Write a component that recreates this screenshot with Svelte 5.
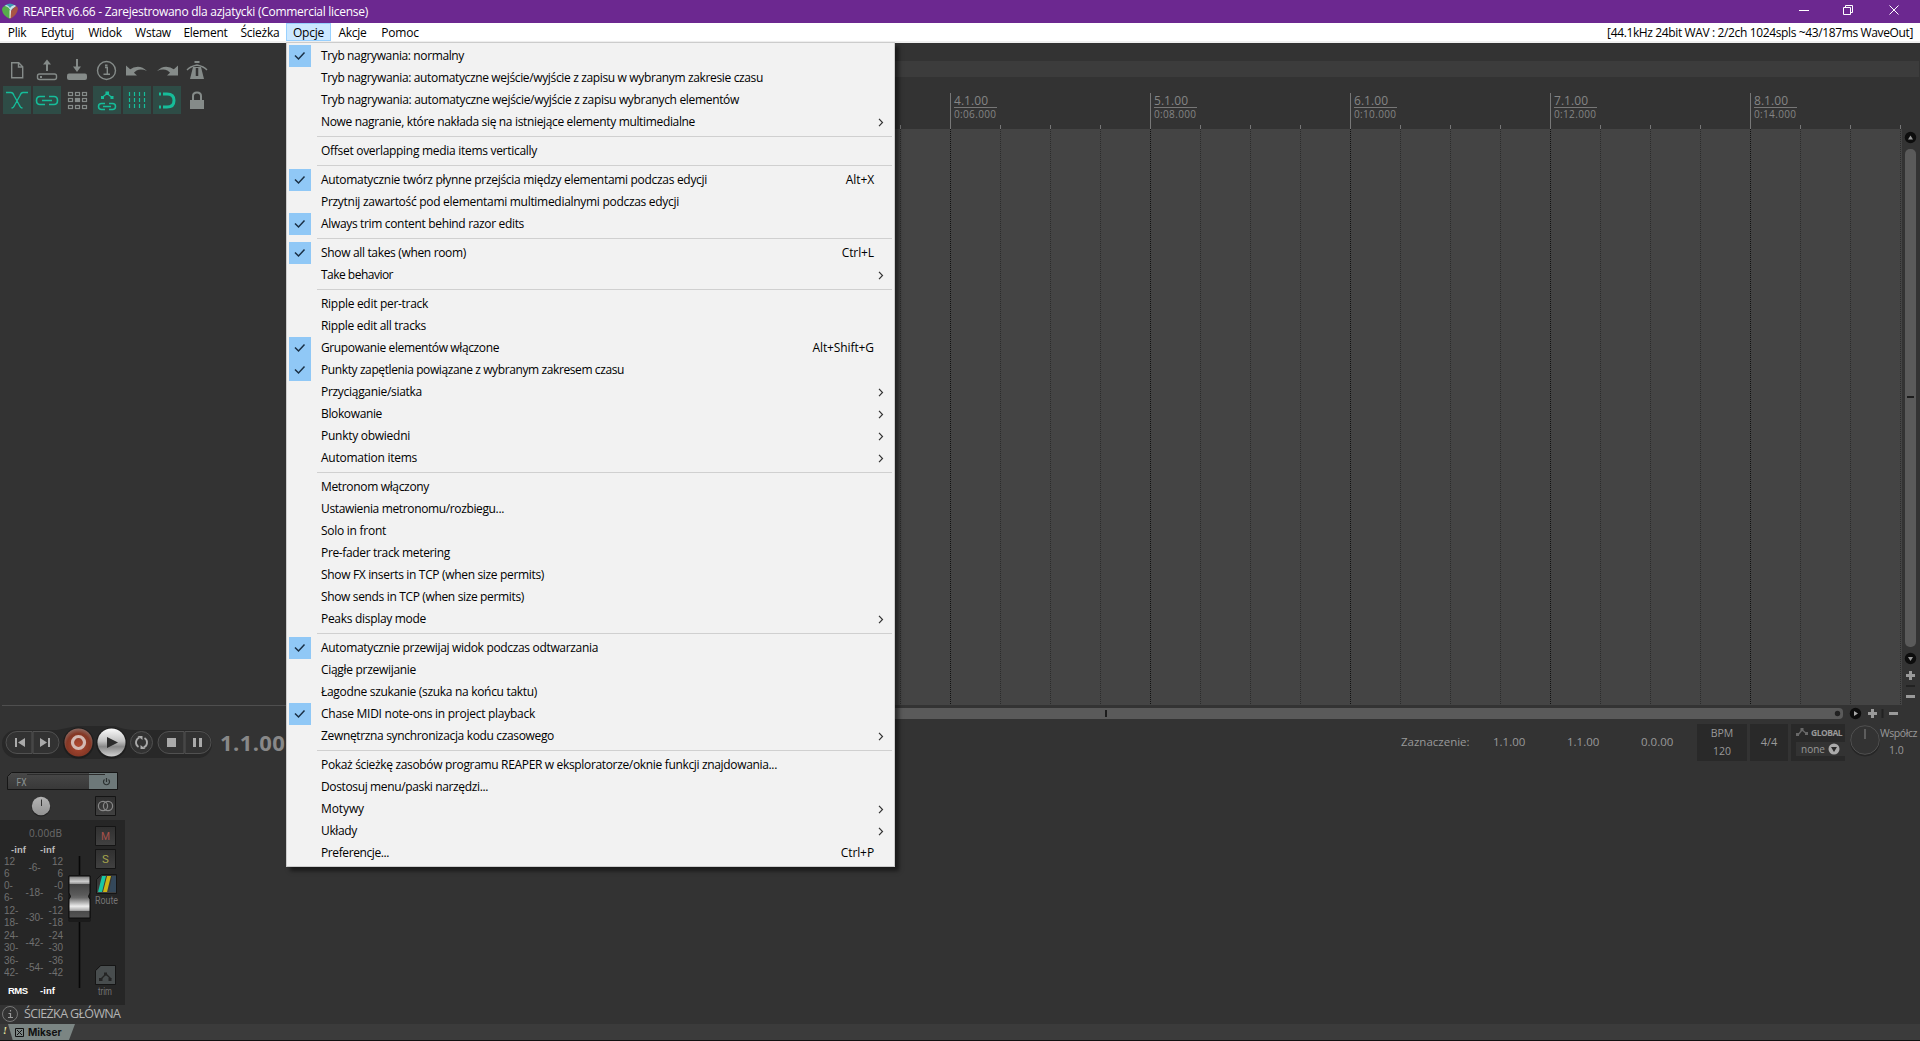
<script>
  const menus = ['Plik', 'Edytuj', 'Widok', 'Wstaw', 'Element', 'Ścieżka', 'Opcje', 'Akcje', 'Pomoc'];
  const w = [34, 47, 48, 48, 57, 52, 45, 43, 52];
  // t: label, w: label width, c: checked, k: shortcut, s: has submenu
  const groups = [
    [
      { t: 'Tryb nagrywania: normalny', w: 143, c: 1 },
      { t: 'Tryb nagrywania: automatyczne wejście/wyjście z zapisu w wybranym zakresie czasu', w: 442 },
      { t: 'Tryb nagrywania: automatyczne wejście/wyjście z zapisu wybranych elementów', w: 418 },
      { t: 'Nowe nagranie, które nakłada się na istniejące elementy multimedialne', w: 374, s: 1 }
    ],
    [{ t: 'Offset overlapping media items vertically', w: 216 }],
    [
      { t: 'Automatycznie twórz płynne przejścia między elementami podczas edycji', w: 386, c: 1, k: 'Alt+X' },
      { t: 'Przytnij zawartość pod elementami multimedialnymi podczas edycji', w: 358 },
      { t: 'Always trim content behind razor edits', w: 203, c: 1 }
    ],
    [{ t: 'Show all takes (when room)', w: 145, c: 1, k: 'Ctrl+L' }, { t: 'Take behavior', w: 72, s: 1 }],
    [
      { t: 'Ripple edit per-track', w: 107 },
      { t: 'Ripple edit all tracks', w: 105 },
      { t: 'Grupowanie elementów włączone', w: 178, c: 1, k: 'Alt+Shift+G' },
      { t: 'Punkty zapętlenia powiązane z wybranym zakresem czasu', w: 303, c: 1 },
      { t: 'Przyciąganie/siatka', w: 101, s: 1 },
      { t: 'Blokowanie', w: 61, s: 1 },
      { t: 'Punkty obwiedni', w: 89, s: 1 },
      { t: 'Automation items', w: 96, s: 1 }
    ],
    [
      { t: 'Metronom włączony', w: 108 },
      { t: 'Ustawienia metronomu/rozbiegu...', w: 183 },
      { t: 'Solo in front', w: 65 },
      { t: 'Pre-fader track metering', w: 129 },
      { t: 'Show FX inserts in TCP (when size permits)', w: 223 },
      { t: 'Show sends in TCP (when size permits)', w: 203 },
      { t: 'Peaks display mode', w: 105, s: 1 }
    ],
    [
      { t: 'Automatycznie przewijaj widok podczas odtwarzania', w: 277, c: 1 },
      { t: 'Ciągłe przewijanie', w: 95 },
      { t: 'Łagodne szukanie (szuka na końcu taktu)', w: 216 },
      { t: 'Chase MIDI note-ons in project playback', w: 214, c: 1 },
      { t: 'Zewnętrzna synchronizacja kodu czasowego', w: 233, s: 1 }
    ],
    [
      { t: 'Pokaż ścieżkę zasobów programu REAPER w eksploratorze/oknie funkcji znajdowania...', w: 456 },
      { t: 'Dostosuj menu/paski narzędzi...', w: 167 },
      { t: 'Motywy', w: 43, s: 1 },
      { t: 'Układy', w: 36, s: 1 },
      { t: 'Preferencje...', w: 68, k: 'Ctrl+P' }
    ]
  ];

  // Spreads the letters of a label so that it takes exactly the given width.
  function fit(node, width) {
    const natural = node.getBoundingClientRect().width;
    node.style.letterSpacing = (width - natural) / node.textContent.length + 'px';
  }

  const beats = Array.from({ length: 21 }, (_, i) => ({ x: 900 + i * 50, major: i % 4 === 1, n: 4 + (i - 1) / 4 }));
  const outer = ['12', '6', '0-', '6-', '12-', '18-', '24-', '30-', '36-', '42-'];
  const right = ['12', '6', '-0', '-6', '-12', '-18', '-24', '-30', '-36', '-42'];
  const scaleY = [11, 23, 35, 47, 60, 72, 85, 97, 110, 122];
  const mid = ['-6-', '-18-', '-30-', '-42-', '-54-'];
</script>

<div class="app">
  <header class="title">
    <svg class="logo" width="16" height="17" viewBox="0 0 16 17">
      <path d="M2 3Q8-2 14 3L10 6L8 9Q7 4 2 3Z" fill="#3f9bb5" />
      <path d="M0 7Q0 3 4 3Q8 4 8 8V16Q1 13 0 7Z" fill="#57ad4c" />
      <path d="M16 6Q15 12 8 16V11Q9 6 14 3Q16 4 16 6Z" fill="#a85445" />
      <path d="M3 3Q8 4 8.500 9Q10 5 14 3L12.500 2Q9 3 8 5Q6 2 4 2Z" fill="#cfe3e6" />
      <path d="M7.500 7L9 8L8.500 15H7.500Z" fill="#e8e8e0" />
    </svg>
    <span class="cap">REAPER v6.66 - Zarejestrowano dla azjatycki (Commercial license)</span>
    <svg class="win" width="110" height="23" viewBox="0 0 110 23" fill="none" stroke="#fff">
      <path d="M5 10.500h10M49.500 7.500h7v7h-7zM51.500 7.500v-2h7v7h-2M95.500 5.500l9 9M104.500 5.500l-9 9" />
    </svg>
  </header>
  <nav>
    {#each menus as m, i}
      <span class="mi" class:on={m === 'Opcje'} style:width="{w[i]}px">{m}</span>
    {/each}
    <span class="audio">[44.1kHz 24bit WAV : 2/2ch 1024spls ~43/187ms WaveOut]</span>
  </nav>

  <main>
    <aside>
      <svg class="tools" width="220" height="80" viewBox="0 0 220 80">
        <g fill="none" stroke="#858b89" stroke-width="1.400">
          <path d="M11.700 19.700h7l4 4v11h-11zM18.500 20v4h4" />
          <rect x="37.500" y="31" width="19" height="5.500" rx="2" />
          <circle cx="106.500" cy="27.500" r="9" />
          <path d="M47 28v-8M77 16v8" stroke-width="2" />
          <path d="M105 24.500h2.300v6.500M103.500 31.300h6.500" />
          <path d="M187 27q3-3.500 10-5M207 27q-3-3.500-10-5" stroke-width="1.300" />
        </g>
        <g fill="#858b89">
          <path d="M43 21.500l4-5 4 5zM73 23.500h8l-4 5.500z" />
          <rect x="67" y="30.500" width="20" height="6.500" rx="2" />
          <rect x="40" y="33" width="2" height="2" />
          <rect x="105" y="21.500" width="2.500" height="2" />
          <path d="M126 22.500l11 10h-11zM129 27q10-7 18 1q-9-4-14 3zM178 22.500l-11 10h11zM175 27q-10-7-18 1q9-4 14 3z" />
          <path d="M194.500 18h5v2h-5zM193 24h8l3 12h-14z" />
        </g>
        <path d="M197 25v8" stroke="#333" stroke-width="2.500" />
        <rect x="190" y="57" width="14" height="9" fill="#858b89" />
        <path d="M193 57v-4q0-3.500 4-3.500t4 3.500v4" fill="none" stroke="#858b89" stroke-width="2" />
        <g fill="#2e4c46">
          <rect x="3" y="43" width="28" height="28" /><rect x="33" y="43" width="28" height="28" />
          <rect x="93" y="43" width="28" height="28" /><rect x="123" y="43" width="28" height="28" />
          <rect x="153" y="43" width="28" height="28" />
        </g>
        <g fill="none" stroke="#16bd9a" stroke-width="1.300">
          <path d="M6 49.500h5q2 0 3 3l5 9q1.500 3.500 3.500 3.500M28 49.500h-5q-2 0-3 3l-5 9q-1.500 3.500-3.500 3.500" />
          <path d="M45 53.500h-5q-3.500 0-3.500 4t3.500 4h5M49 53.500h5q3.500 0 3.500 4t-3.500 4h-5M42 57.500h10" stroke-width="1.600" />
          <path d="M105 60.500h-3.500q-3 0-3 3t3 3h3.500M109 60.500h3.500q3 0 3 3t-3 3h-3.500M103 63.500h8" stroke-width="1.500" />
          <path d="M102 54.500l5-4 5 4" />
          <path d="M129.500 49v17M134.500 49v17M139.500 49v17M144.500 49v17" stroke-dasharray="4 2" stroke-width="1.200" />
          <path d="M163 51h4q7 0 7 6.500t-7 6.500h-4" stroke-width="3" />
        </g>
        <g fill="#16bd9a">
          <rect x="101" y="53" width="3" height="3" /><rect x="105.500" y="48.500" width="3.500" height="3.500" /><rect x="110.500" y="53" width="3" height="3" />
          <rect x="159" y="49.500" width="2" height="3" /><rect x="159" y="62.500" width="2" height="3" />
        </g>
        <g fill="none" stroke="#858b89" stroke-width="1.200">
          {#each [49.5, 55.5, 62.5] as y}
            {#each [68.5, 75.5, 82.5] as x}
              <rect {x} {y} width="4" height="3" fill={x === 75.5 && y === 55.5 ? '#858b89' : 'none'} />
            {/each}
          {/each}
        </g>
      </svg>
    </aside>
    <section class="arrange">
      <svg width="1634" height="663" viewBox="286 43 1634 663">
        <rect x="286" y="61" width="1633" height="16" fill="#3c3c3c" />
        <rect x="286" y="129" width="1616" height="576" fill="#444" />
        {#each beats as b}
          <path d="M{b.x + 0.5} {b.major ? 93 : 125}V129" stroke="#777" />
          <path d="M{b.x + 0.5} 129V705" stroke={b.major ? '#111' : '#2b2b2b'} stroke-dasharray="1 1" />
          {#if b.major}
            <text x={b.x + 4} y="105" font-size="12" textLength="34">{b.n}.1.00</text>
            <path d="M{b.x + 4} 107.500h43" stroke="#777" />
            <text x={b.x + 4} y="118" font-size="10" textLength="42">0:{String((b.n - 1) * 2).padStart(2, '0')}.000</text>
          {/if}
        {/each}
        <rect x="1905" y="149" width="11" height="498" rx="5" fill="#5a5a5a" />
        <path d="M1907 397h7" stroke="#1c1c1c" stroke-width="2" />
        <g fill="#0d0d0d"><circle cx="1910.500" cy="137.500" r="5.700" /><circle cx="1910.500" cy="658.500" r="5.700" /></g>
        <path d="M1908 139.500h5l-2.500-4zM1908 657h5l-2.500 4z" fill="#999" />
        <path d="M1906 675.500h9M1910.500 671v9M1906 696.500h9" stroke="#9a9a9a" stroke-width="3" />
        <path d="M1906 686h9" stroke="#222" stroke-width="2" />
      </svg>
    </section>
  </main>

  <div class="hscroll">
    <svg width="1634" height="16" viewBox="286 705 1634 16">
      <rect x="280" y="708" width="1563" height="11" rx="4" fill="#5a5a5a" />
      <path d="M1106 710v7" stroke="#1c1c1c" stroke-width="2" />
      <circle cx="1837.500" cy="713.500" r="2.700" fill="#222" />
      <circle cx="1855.500" cy="713.500" r="5.700" fill="#0d0d0d" />
      <path d="M1854 711v5l4-2.500z" fill="#aaa" />
      <path d="M1868 713.500h9M1872.500 709v9M1889 713.500h9" stroke="#9a9a9a" stroke-width="3" />
      <path d="M1882.500 709v9" stroke="#222" stroke-width="2" />
    </svg>
  </div>

  <section class="transport">
    <svg class="btns" width="216" height="46" viewBox="0 720 216 46">
      <defs>
        <radialGradient id="rec" cx=".5" cy=".6" r=".6"><stop offset="0" stop-color="#b04a32" /><stop offset=".7" stop-color="#843725" /><stop offset="1" stop-color="#8d6961" /></radialGradient>
        <linearGradient id="ply" x2="0" y2="1"><stop offset="0" stop-color="#fafafa" /><stop offset=".45" stop-color="#c2c2c2" /><stop offset=".65" stop-color="#888" /><stop offset="1" stop-color="#d0d0d0" /></linearGradient>
      </defs>
      <path d="M16 730h41q10-2 20-4h38q10 4 20 4h63a13 13 0 0 1 0 28h-63q-10-1-20 1h-38q-10-2-20-1h-41a13 13 0 0 1 0-28z" fill="#282828" />
      <g fill="#323232" stroke="#515151">
        <path d="M32 731.500H17a11 11 0 0 0 0 22H32zM33 731.500H48a11 11 0 0 1 0 22H33z" />
        <path d="M184 731.500H169a11 11 0 0 0 0 22H184zM185 731.500H200a11 11 0 0 1 0 22H185z" />
        <circle cx="141.500" cy="742.500" r="11" />
      </g>
      <circle cx="78.500" cy="743" r="15.500" fill="#1d1d1d" /><circle cx="78.500" cy="742.500" r="14" fill="url(#rec)" />
      <circle cx="78.500" cy="742.500" r="6" fill="none" stroke="#d3bab4" stroke-width="3.200" />
      <circle cx="111.500" cy="743" r="15.500" fill="#1d1d1d" /><circle cx="111.500" cy="742.500" r="14" fill="url(#ply)" />
      <path d="M107 737v11l11-5.500z" fill="#2c2c2c" />
      <g fill="#aaa">
        <path d="M15 738h2v9h-2zM25 738v9l-7-4.500zM40 738v9l7-4.500zM48 738h2v9h-2zM167 738h9v9h-9zM193 738h3v9h-3zM199 738h3v9h-3z" />
      </g>
      <g fill="none" stroke="#aaa" stroke-width="1.800"><path d="M138.500 747a5.300 5.300 0 0 1 1-9.500M144.500 738a5.300 5.300 0 0 1-1 9.500" /></g>
      <path d="M137.500 736h5v4zM145.500 749h-5v-4z" fill="#aaa" />
    </svg>
    <span class="pos">1.1.00</span>
    <div class="sel"><span>Zaznaczenie:</span><span>1.1.00</span><span>1.1.00</span><span>0.0.00</span></div>
    <div class="box bpm"><span>BPM</span><span>120</span></div>
    <div class="box sig">4/4</div>
    <div class="box glob">
      <div class="gl"><svg width="13" height="10" viewBox="0 0 13 10"><path d="M2 8l4-5 5 4" fill="none" stroke="#686868" stroke-width="1.300" /><path d="M0 6h3v3h-3zM4.500 1h3v3h-3zM9 5h3v3h-3z" fill="#686868" /></svg>GLOBAL</div>
      <div class="none">none<svg width="12" height="12" viewBox="0 0 12 12"><circle cx="6" cy="6" r="5.500" fill="#aaa" /><path d="M3 4h6l-3 5z" fill="#2a2a2a" /></svg></div>
    </div>
    <svg class="knob" width="32" height="34" viewBox="0 0 32 34"><circle cx="16" cy="17.500" r="15" fill="#262626" /><circle cx="16" cy="16" r="14.300" fill="#333" stroke="#505050" /><path d="M16 5v10" stroke="#888" /></svg>
    <div class="rate"><span use:fit={37}>Współcz</span><span>1.0</span></div>
  </section>

  <section class="mixer">
    <svg width="130" height="255" viewBox="0 769 130 255">
      <defs>
        <linearGradient id="fx" x2="0" y2="1"><stop offset="0" stop-color="#484848" /><stop offset="1" stop-color="#383838" /></linearGradient>
        <linearGradient id="bt" x2="0" y2="1"><stop offset="0" stop-color="#303030" /><stop offset="1" stop-color="#414141" /></linearGradient>
        <linearGradient id="pan" x2="0" y2="1"><stop offset="0" stop-color="#b4b4b4" /><stop offset="1" stop-color="#929292" /></linearGradient>
        <linearGradient id="fad" x2="0" y2="1">
          <stop offset="0" stop-color="#777" /><stop offset=".13" stop-color="#ccc" /><stop offset=".18" stop-color="#999" /><stop offset=".2" stop-color="#444" /><stop offset=".45" stop-color="#5b5b5b" />
          <stop offset=".52" stop-color="#6a6a6a" /><stop offset=".72" stop-color="#ededed" /><stop offset=".82" stop-color="#aaa" /><stop offset=".84" stop-color="#4a4a4a" /><stop offset="1" stop-color="#555" />
        </linearGradient>
      </defs>
      <rect x="0" y="820" width="125" height="185" fill="#262626" />
      <path d="M7.500 789.500v-13l4-4h106v17z" fill="url(#fx)" stroke="#161616" />
      <rect x="89" y="773" width="28" height="16" fill="#6d7879" />
      <path d="M27 774.500h78" stroke="#2b2b2b" />
      <text class="rb" x="16.500" y="785.500" font-size="10.500" textLength="10" lengthAdjust="spacingAndGlyphs" fill="#8b9291">FX</text>
      <path d="M104.500 779.500a3 3 0 1 0 4 0M106.500 778v4" fill="none" stroke="#2b3030" stroke-width="1.200" />
      <circle cx="41" cy="807" r="9.500" fill="#222" /><circle cx="41" cy="806" r="9.200" fill="url(#pan)" /><path d="M41.500 799.500v6.500" stroke="#333" />
      <g fill="url(#bt)" stroke="#151515">
        <path d="M95.500 796.500h20v19h-20z" /><path d="M95.500 826.500h20v19h-20z" /><path d="M95.500 849.500h20v19h-20z" />
        <path d="M96.500 893.500v-14l5-5h15v19z" /><path d="M95.500 984.500v-14l5-5h15v19z" />
      </g>
      <path d="M96 984v-13l5-5h14v18z" fill="#484d4e" />
      <g fill="none" stroke="#888" stroke-width="1.200"><circle cx="103" cy="806" r="4.600" /><circle cx="108" cy="806" r="4.600" /></g>
      <text class="rb" x="101" y="840" font-size="11.500" textLength="9" lengthAdjust="spacingAndGlyphs" fill="#a8504a">M</text>
      <text class="rb" x="102" y="863" font-size="11.500" fill="#a5a54c">S</text>
      <path d="M98 892l4-16h4l-4 16z" fill="#18c8a4" /><path d="M103 892l4-16h4l-4 16z" fill="#cdb514" /><path d="M109 892l3-16h4v16z" fill="#34485a" />
      <text class="rb" x="95" y="904" font-size="10" textLength="23" lengthAdjust="spacingAndGlyphs" fill="#757575">Route</text>
      <path d="M101 979l5-5 5 5" fill="none" stroke="#242424" stroke-width="1.400" /><path d="M99 978h3.500v3h-3.500zM104 972.500h3v3h-3zM108.500 978h3v3h-3z" fill="#242424" />
      <text class="rb" x="98" y="995" font-size="10" textLength="14" lengthAdjust="spacingAndGlyphs" fill="#757575">trim</text>
      <text x="29" y="837" font-size="10" textLength="33" fill="#6c6c6c">0.00dB</text>
      <g class="ar" font-weight="bold" font-size="9.500" fill="#bbb">
        <text x="11" y="853" textLength="15">-inf</text><text x="40" y="853" textLength="15">-inf</text>
        <text x="8" y="994" fill="#fff" textLength="20">RMS</text><text x="40" y="994" fill="#fff" textLength="15">-inf</text>
      </g>
      <g class="ar" font-size="10" fill="#707070">
        {#each outer as o, i}
          <text x="4" y={853.5 + scaleY[i]}>{o}</text><text x="63" y={853.5 + scaleY[i]} text-anchor="end">{right[i]}</text>
        {/each}
        {#each mid as m, i}<text x="34.500" y={871 + i * 25} text-anchor="middle">{m}</text>{/each}
      </g>
      <path d="M79.500 856v132" stroke="#070707" stroke-width="1.600" />
      <rect x="68" y="875" width="23" height="47" rx="2" fill="#1b1b1b" />
      <path d="M69 876h21v17q-3 4 0 6v19h-21v-19q3-2 0-6z" fill="url(#fad)" stroke="#0d0d0d" />
      <circle cx="10" cy="1014" r="7.500" fill="none" stroke="#777" /><path d="M10.500 1010v1.500M8.500 1013.500h2v4M8 1017.500h5" stroke="#999" fill="none" stroke-width="1.200" />
      <text x="24" y="1018" font-size="12.500" textLength="97" fill="#b4b4b4">ŚCIEŻKA GŁÓWNA</text>
    </svg>
  </section>
  <footer>
    <span class="bang">!</span>
    <span class="tab"><svg width="9" height="9" viewBox="0 0 9 9"><path d="M.5.500h8v8h-8zM2 2l5 5M7 2l-5 5" fill="none" stroke="#111" /></svg><b>Mikser</b></span>
  </footer>

  <div class="menu">
    {#each groups as g, i}
      {#if i}<div class="sep"></div>{/if}
      {#each g as r}
        <div class="row">
          <span class="chk" class:checked={r.c}>{#if r.c}<svg width="12" height="10" viewBox="0 0 12 10"><path d="M1 4.500l3.500 3.500L10.500 1.500" fill="none" stroke="#1a3045" stroke-width="1.500" /></svg>{/if}</span>
          <span class="lbl" use:fit={r.w}>{r.t}</span>
          {#if r.k}<span class="key">{r.k}</span>{/if}
          {#if r.s}<svg class="arr" width="6" height="9" viewBox="0 0 6 9"><path d="M1 .800L4.500 4.500L1 8.200" fill="none" stroke="#333" stroke-width="1.200" /></svg>{/if}
        </div>
      {/each}
    {/each}
  </div>
</div>

<style>
  :global(body) { background: #333; overflow: hidden; }
  .app { position: relative; width: 1920px; height: 1041px; display: flex; flex-direction: column; background: #333; font: 12px/16px 'Open Sans', 'Noto Sans', sans-serif; overflow: hidden; }
  svg { display: block; flex: none; }
  .title { height: 23px; background: #6c2890; color: #fff; display: flex; align-items: center; padding-left: 2px; }
  .cap { margin-left: 5px; flex: 1; letter-spacing: -0.28px; }
  .win { margin-right: 16px; }
  nav { height: 18px; background: #fff; border-bottom: 2px solid #f0f0f0; display: flex; }
  .mi { box-sizing: border-box; text-align: center; line-height: 19px; letter-spacing: -0.25px; white-space: nowrap; }
  .on { background: #cce8ff; border: 1px solid #99d1ff; line-height: 17px; }
  .audio { margin-left: auto; margin-right: 7px; line-height: 19px; letter-spacing: -0.37px; }
  main { height: 662px; display: flex; }
  aside { width: 286px; }
  .arrange { height: 662px; overflow: hidden; }
  .arrange text { fill: #858585; }
  .hscroll { height: 15px; display: flex; justify-content: flex-end; }
  .hscroll::before { content: ''; width: 284px; height: 1px; margin-right: auto; margin-left: 2px; background: #4f4f4f; }
  .transport { height: 49px; display: flex; color: #999; }
  .transport > * { flex: none; }
  .btns { width: 216px; }
  .pos { width: 110px; padding: 9px 0 0 4px; box-sizing: border-box; font-size: 22px; line-height: 26px; font-weight: 700; letter-spacing: 0.4px; color: #888; }
  .sel { display: flex; width: 296px; margin-left: 1075px; padding-top: 14px; font-size: 11.500px; }
  .sel span { width: 74px; flex: none; white-space: nowrap; }
  .sel span:first-child { width: 92px; }
  .sel span:last-child { width: 56px; }
  .box { background: #292929; margin-top: 4px; height: 37px; box-sizing: border-box; }
  .bpm { width: 50px; display: flex; flex-direction: column; align-items: center; font-size: 10.500px; line-height: 18px; }
  .sig { width: 38px; margin-left: 3px; text-align: center; line-height: 36px; font-size: 11px; }
  .glob { width: 54px; margin-left: 3px; padding: 3px 5px; }
  .gl { display: flex; gap: 2px; font: bold 8.500px/12px 'Open Sans', sans-serif; letter-spacing: -0.5px; }
  .none { display: flex; justify-content: space-between; align-items: center; padding: 0 5px; height: 14px; margin-top: 3px; background: #333; font-size: 10px; line-height: 14px; margin-right: -5px; }
  .knob { margin: 4px 0 0 4px; }
  .rate { display: flex; flex-direction: column; align-items: flex-start; font-size: 10.500px; line-height: 17px; padding-top: 5px; width: 37px; white-space: nowrap; margin-left: -1px; }
  .rate span + span { padding-left: 9px; }
  .mixer { height: 255px; }
  .mixer .rb { font-family: Roboto, sans-serif; }
  .mixer .ar { font-family: 'Liberation Sans', sans-serif; }
  footer { height: 16px; background: #3b3b3b; border-bottom: 1px solid #111; display: flex; }
  .bang { width: 8px; padding-left: 3px; color: #e8e8a0; font: italic bold 10px/14px 'Liberation Serif', serif; box-sizing: border-box; }
  .tab { width: 67px; display: flex; align-items: center; gap: 4px; padding-left: 7px; box-sizing: border-box; background: #7b8583; clip-path: polygon(0 0, 100% 0, 91% 100%, 7% 100%); font-size: 10px; line-height: 15px; color: #111; }
  .tab b { font-family: Inter, sans-serif; }
  .menu { position: absolute; left: 286px; top: 42px; width: 609px; height: 825px; box-sizing: border-box; background: #f2f2f2; border: 1px solid #ccc; padding: 2px; box-shadow: 4px 4px 4px rgba(0, 0, 0, 0.5); color: #000; }
  .row { height: 22px; display: flex; align-items: center; }
  .chk { width: 22px; height: 22px; display: flex; align-items: center; justify-content: center; }
  .checked { background: #90c8f6; }
  .lbl { margin-left: 10px; margin-right: auto; white-space: nowrap; }
  .key { margin-right: 18px; letter-spacing: -0.1px; }
  .arr { margin-right: 8px; }
  .sep { height: 7px; margin-left: 28px; background: linear-gradient(#d0d0d0, #d0d0d0) 0 3px / 100% 1px no-repeat; }
</style>
